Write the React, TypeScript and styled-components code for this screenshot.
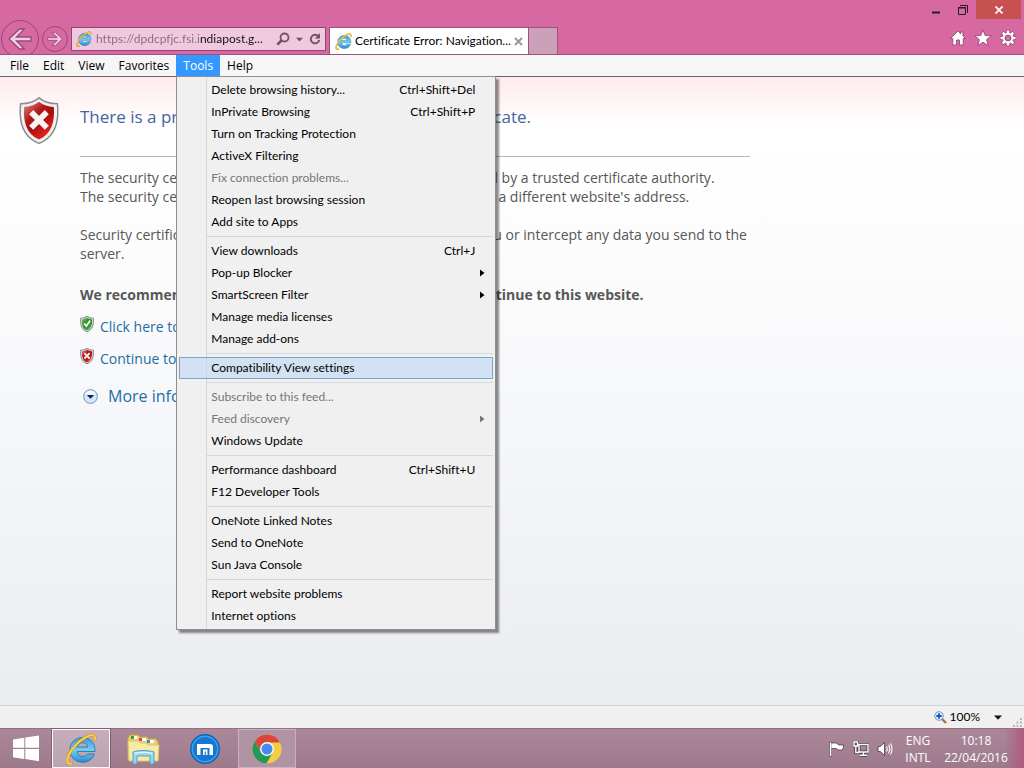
import React from "react";
import styled, { createGlobalStyle, css } from "styled-components";

const ui = `Lato, "Open Sans", sans-serif`;
const pageFont = `"Open Sans", "Noto Sans", sans-serif`;

const Global = createGlobalStyle`
  * { box-sizing: border-box; }
  body { margin: 0; font: 12px/16px ${ui}; font-variant-ligatures: none; color: #000; }
  button { font: inherit; font-variant-ligatures: none; color: inherit; border: 0; padding: 0; background: none; text-align: left; }
  svg { display: block; flex: none; }
`;

/* ---------- window frame ---------- */

const Window = styled.div`
  min-height: 100vh;
  display: flex;
  flex-direction: column;
`;

const TitleBar = styled.header`
  display: flex;
  justify-content: space-between;
  height: 55px;
  background: #d669a1;
  border-bottom: 1px solid #a4507e;
  overflow: hidden;
`;

const NavRow = styled.div`
  display: flex;
  align-items: flex-end;
`;

const History = styled.div`
  display: flex;
  align-items: center;
  gap: 3px;
  height: 38px;
  padding: 8px 3px 0 1px;
`;

const RoundButton = styled.button<{ $size: number }>`
  flex: none;
  display: grid;
  place-items: center;
  width: ${(p) => p.$size}px;
  height: ${(p) => p.$size}px;
  border: 1px solid #96487a;
  border-radius: 50%;
`;

const AddressBar = styled.div`
  display: flex;
  align-items: center;
  width: 255px;
  height: 24px;
  margin: 0 3px 3px 0;
  padding: 0 4px;
  gap: 4px;
  background: #f1c9de;
  border: 1px solid #8f4672;
`;

const AddressInput = styled.input`
  flex: 1;
  min-width: 0;
  padding: 0;
  border: 0;
  font: 12px/16px ${ui};
  font-variant-ligatures: none;
  background: linear-gradient(90deg, #866c7b 104px, #111 104px);
  background-clip: text;
  -webkit-text-fill-color: transparent;
  outline: none;
`;

const AddressTools = styled.div`
  display: flex;
  align-items: center;
  gap: 6px;
`;

const Tab = styled.div`
  display: flex;
  align-items: center;
  gap: 3px;
  width: 200px;
  height: 27px;
  padding: 0 6px 0 5px;
  background: #fff;
  border: 1px solid #a4507e;
  border-bottom: 0;
`;

const TabTitle = styled.span`
  flex: 1;
  white-space: nowrap;
`;

const NewTab = styled.button`
  width: 29px;
  height: 27px;
  background: #cba0b9;
  border: 1px solid #a4507e;
  border-width: 1px 1px 0 0;
`;

const FrameSide = styled.div`
  display: flex;
  flex-direction: column;
  justify-content: space-between;
  align-items: flex-end;
  padding: 0 3px 7px 0;
`;

const CaptionButtons = styled.div`
  display: flex;
`;

const CaptionButton = styled.button<{ $close?: boolean }>`
  display: grid;
  place-items: center;
  width: ${(p) => (p.$close ? 45 : 27)}px;
  height: 19px;
  background: ${(p) => (p.$close ? "#c75050" : "transparent")};
`;

const FrameTools = styled.div`
  display: flex;
  gap: 7px;
  padding-right: 4px;
`;

/* ---------- menu bar and drop-down ---------- */

const MenuBar = styled.nav`
  display: flex;
  height: 22px;
  padding-left: 3px;
  background: #f6f6f6;
  border-bottom: 1px solid #6d6266;
`;

const MenuSlot = styled.div`
  position: relative;
`;

const MenuTitle = styled.button<{ $open?: boolean }>`
  height: 21px;
  padding: 0 7px;
  font-family: ${pageFont};
  ${(p) => p.$open && css`background: #3399ff; color: #fff;`}
`;

const Dropdown = styled.div`
  position: absolute;
  z-index: 2;
  top: 21px;
  left: 0;
  width: 320px;
  padding: 2px;
  border: 1px solid #8f8f8f;
  background: linear-gradient(90deg, #f0f0f0 29px, #d7d7d7 29px, #d7d7d7 30px, #f0f0f0 30px);
  box-shadow: 3px 3px 2px rgba(0, 0, 0, 0.45);
`;

const MenuGroup = styled.div`
  & + & {
    margin-top: 7px;
    position: relative;
  }
  & + &::before {
    content: "";
    position: absolute;
    top: -4px;
    left: 27px;
    right: 0;
    height: 1px;
    background: #d7d7d7;
  }
`;

const MenuItem = styled.button<{ $active?: boolean }>`
  display: flex;
  align-items: center;
  width: 100%;
  height: 22px;
  padding: 0 7px 0 31px;
  border: 1px solid transparent;
  ${(p) => p.$active && css`
    border-color: #78a5d6;
    background: rgba(185, 215, 245, 0.55);
  `}
  &:disabled { color: #767676; }
`;

const ItemLabel = styled.span`
  flex: 1;
  white-space: nowrap;
`;

const Shortcut = styled.kbd`
  font: inherit;
  padding-right: 10px;
`;

/* ---------- page ---------- */

const Page = styled.main`
  flex: 1;
  display: flex;
  align-items: flex-start;
  gap: 21px;
  padding: 20px 19px;
  font-family: ${pageFont};
  background:
    linear-gradient(180deg, #ffebeb, rgba(255, 255, 255, 0) 50px),
    linear-gradient(180deg, #fff 60px, #fcfcfc 180px, #f6f7fa 340px, #ebecf0);
`;

const Article = styled.article`
  flex: 1;
  min-width: 0;
  max-width: 670px;
  color: #575757;
  font-size: 14px;
  line-height: 19px;
`;

const Headline = styled.h1`
  margin: 0;
  padding: 8px 0 27px;
  border-bottom: 1px solid #b6babf;
  font-size: 17px;
  line-height: 24px;
  font-weight: 400;
  color: #4465a2;
`;

const Para = styled.p`
  margin: 0;
  padding-top: 19px;
`;

const Intro = styled(Para)`
  padding-top: 11px;
`;

const Strong = styled(Para)`
  padding-top: 22px;
  font-weight: 700;
`;

const Choice = styled.div<{ $large?: boolean }>`
  display: flex;
  align-items: center;
  gap: ${(p) => (p.$large ? 10 : 6)}px;
  height: 19px;
  margin-top: ${(p) => (p.$large ? 19 : 13)}px;
  padding-left: ${(p) => (p.$large ? 3 : 0)}px;
  font-size: ${(p) => (p.$large ? 16 : 14)}px;
  svg { margin-bottom: ${(p) => (p.$large ? 0 : 6)}px; }
`;

const PageLink = styled.a`
  color: #1e6ea6;
  text-decoration: none;
`;

const StatusBar = styled.footer`
  display: flex;
  justify-content: flex-end;
  align-items: center;
  height: 23px;
  padding-right: 2px;
  background: #f0f0f0;
  border-top: 1px solid #d4d5d8;
`;

const ZoomButton = styled.button`
  display: flex;
  align-items: center;
  gap: 3px;
`;

const ZoomArrow = styled.button`
  padding: 4px 11px 4px 14px;
`;

const Grip = styled.div`
  align-self: flex-end;
  padding-bottom: 1px;
`;

/* ---------- taskbar ---------- */

const Taskbar = styled.footer`
  display: flex;
  align-items: stretch;
  height: 40px;
  color: #fff;
  background:
    linear-gradient(270deg, #b05a80, rgba(176, 90, 128, 0) 20px),
    linear-gradient(180deg, #ab8799, #9c7a8c);
  border-top: 1px solid #927083;
`;

const StartButton = styled.button`
  display: grid;
  place-items: center;
  width: 51px;
`;

const Pins = styled.div`
  flex: 1;
  display: flex;
  gap: 4px;
  padding-left: 1px;
`;

const Pin = styled.button<{ $state?: "active" | "open" }>`
  display: grid;
  place-items: center;
  width: 58px;
  ${(p) => p.$state === "active" && css`
    background: linear-gradient(#c6adba, #bba3b0);
    border: 1px solid #fdf8fb;
    outline: 1px solid #80606f;
    outline-offset: 0;
  `}
  ${(p) => p.$state === "open" && css`
    background: #b094a3;
    border: 1px solid #c9b3bf;
  `}
`;

const Tray = styled.div`
  display: flex;
  align-items: center;
  gap: 8px;
  padding-right: 15px;
`;

const TrayText = styled.button<{ $w: number }>`
  width: ${(p) => p.$w}px;
  font-family: ${pageFont};
  text-align: center;
  line-height: 17px;
`;

/* ---------- drawings ---------- */

const IeLogo = ({ size }: { size: number }) => (
  <svg width={size} height={size} viewBox="0 0 32 32" aria-hidden="true">
    <defs>
      <linearGradient id={`ie${size}`} x1="0" y1="0" x2="0" y2="1">
        <stop offset="0" stopColor="#3d9ad6" />
        <stop offset=".5" stopColor="#6fd0f5" />
        <stop offset="1" stopColor="#2c8ccb" />
      </linearGradient>
    </defs>
    <path
      d="M30 18.500H12.200c.4 3 2.600 4.900 5.500 4.900 2.200 0 3.900-.9 4.700-2.400h7C27.700 26 23.600 29.300 17.700 29.300 10.300 29.300 5 24.200 5 17S10.300 4.500 17.600 4.500C25.300 4.500 30.300 10 30 18.500zM12.400 14h10.400c-.4-2.600-2.400-4.200-5.200-4.200-2.700 0-4.700 1.600-5.200 4.200z"
      fill={`url(#ie${size})`}
      stroke="#1f70ad"
      strokeWidth=".8"
    />
    <path
      d="M6.500 30.500C3.200 31.300 1.600 29.500 2.500 25.500 4.200 18 13.500 7.200 22.500 3.300c4.600-2 7.700-1.400 7.600 2.700"
      fill="none"
      stroke="#c98f12"
      strokeWidth="3"
      strokeLinecap="round"
    />
    <path
      d="M6.500 30.500C3.200 31.300 1.600 29.500 2.500 25.500 4.200 18 13.500 7.200 22.500 3.300c4.600-2 7.700-1.400 7.600 2.700"
      fill="none"
      stroke="#fbd24a"
      strokeWidth="2"
      strokeLinecap="round"
    />
  </svg>
);

const Arrow = ({ w, back }: { w: number; back?: boolean }) => (
  <svg width={w} height={w} viewBox="0 0 24 24" aria-hidden="true">
    <path
      transform={back ? undefined : "matrix(-1 0 0 1 24 0)"}
      d="M1 12 11.500 2h4.800L8.500 10H23v4H8.500l7.800 8h-4.800z"
      fill="#f3cfe2"
      stroke="#96487a"
      strokeWidth="1.300"
    />
  </svg>
);

const Shield = ({ w, h, ok }: { w: number; h: number; ok?: boolean }) => {
  const id = `sh${w}${ok ? "g" : "r"}`;
  return (
    <svg width={w} height={h} viewBox="0 0 38 45" aria-hidden="true">
      <defs>
        <linearGradient id={id} x1="0" y1="0" x2=".7" y2="1">
          <stop offset="0" stopColor={ok ? "#7cc46a" : "#e08a8a"} />
          <stop offset=".4" stopColor={ok ? "#2f9a2a" : "#b31818"} />
          <stop offset=".6" stopColor={ok ? "#1d861c" : "#a80d0d"} />
          <stop offset="1" stopColor={ok ? "#4cc040" : "#ee2a20"} />
        </linearGradient>
      </defs>
      <path
        d="M19 .8c4.500 4 10.800 5.600 17.600 5.700C38.500 24 35 38 19 44.400 3 38-.5 24 1.400 6.500 8.200 6.400 14.500 4.800 19 .8z"
        fill="#f1f1f1"
        stroke="#8b8b8b"
        strokeWidth={w < 20 ? 3 : 1.4}
      />
      <path d="M19 4.500c4.200 3.200 9 4.600 14.200 5C34.300 24 31 35.200 19 40.800 7 35.200 3.700 24 4.800 9.500 10 9.100 14.800 7.700 19 4.500z" fill={`url(#${id})`} />
      {ok ? (
        <path d="m11 21 6 7.500L28 13" fill="none" stroke="#fff" strokeWidth="5" />
      ) : (
        <path d="m11.500 14.500 15 15m0-15-15 15" fill="none" stroke="#f4f4f4" strokeWidth="5.500" />
      )}
    </svg>
  );
};

const Submenu = () => (
  <svg width="5" height="8" viewBox="0 0 5 8" aria-hidden="true">
    <path d="M0 .5 4.500 4 0 7.500z" fill="currentColor" />
  </svg>
);

const Down = ({ color, w = 8 }: { color: string; w?: number }) => (
  <svg width={w} height="5" viewBox="0 0 8 5" aria-hidden="true">
    <path d="M0 .5h8L4 4.700z" fill={color} />
  </svg>
);

const ExplorerIcon = () => (
  <svg width="34" height="32" viewBox="0 0 34 32" aria-hidden="true">
    <path d="M2 5 4 2h8l2 2h7l1 2h8l2 3v18H2z" fill="#e9cf72" stroke="#c9a844" />
    <path d="M5 3h6v3H5z" fill="#fff" /><path d="M5 3h3v3H5z" fill="#2fa13b" />
    <path d="M13 5h7v3h-7z" fill="#fff" /><path d="M13 5h3v3h-3z" fill="#cf4a35" />
    <path d="M21 7h7v3h-7z" fill="#fff" /><path d="M21 7h3v3h-3z" fill="#2f8fd0" />
    <path d="M2 8h10l2 2h6l2 2h11l-1 16H3z" fill="#f8e9a4" stroke="#dfc568" />
    <path d="M7 19c6-2 14-2 21 0v12h-4v-8H11v8H7z" fill="#9ad5ee" stroke="#4e9fca" />
    <path d="M8.500 20.500c6-1.500 12-1.500 18 0" fill="none" stroke="#dff5fd" strokeWidth="1.400" />
  </svg>
);

const MaxthonIcon = () => (
  <svg width="32" height="32" viewBox="0 0 32 32" aria-hidden="true">
    <circle cx="16" cy="16" r="15" fill="#0f62b5" />
    <circle cx="16" cy="16" r="13.500" fill="#35a6ee" />
    <circle cx="16" cy="16" r="12" fill="#1577d3" />
    <path d="M8 22V11h13q3 0 3 3v8h-3.500v-7H11.500v7z" fill="#fff" />
    <path d="M14 22v-5.500h4.500V22h-1.700v-3.500h-1.100V22z" fill="#fff" />
  </svg>
);

const ChromeIcon = () => (
  <svg width="32" height="32" viewBox="0 0 32 32" aria-hidden="true">
    <circle cx="16" cy="16" r="14.500" fill="#f8cc42" />
    <path d="M16 9.500h13A14.500 14.500 0 0 0 3.800 8.200L10 19z" fill="#d9473b" />
    <path d="M3.800 8.200A14.500 14.500 0 0 0 15.500 30.500L21.700 19.500 16 22.500l-6-3.300z" fill="#21995a" />
    <circle cx="16" cy="16" r="7" fill="#f7f7f7" />
    <circle cx="16" cy="16" r="5.500" fill="#4688f0" />
  </svg>
);

const trayStroke = { fill: "none", stroke: "#fff", strokeWidth: 1.4 };

/* ---------- data ---------- */

type Item = { label: string; keys?: string; sub?: boolean; off?: boolean; active?: boolean };

const toolsMenu: Item[][] = [
  [
    { label: "Delete browsing history...", keys: "Ctrl+Shift+Del" },
    { label: "InPrivate Browsing", keys: "Ctrl+Shift+P" },
    { label: "Turn on Tracking Protection" },
    { label: "ActiveX Filtering" },
    { label: "Fix connection problems...", off: true },
    { label: "Reopen last browsing session" },
    { label: "Add site to Apps" },
  ],
  [
    { label: "View downloads", keys: "Ctrl+J" },
    { label: "Pop-up Blocker", sub: true },
    { label: "SmartScreen Filter", sub: true },
    { label: "Manage media licenses" },
    { label: "Manage add-ons" },
  ],
  [{ label: "Compatibility View settings", active: true }],
  [
    { label: "Subscribe to this feed...", off: true },
    { label: "Feed discovery", off: true, sub: true },
    { label: "Windows Update" },
  ],
  [{ label: "Performance dashboard", keys: "Ctrl+Shift+U" }, { label: "F12 Developer Tools" }],
  [{ label: "OneNote Linked Notes" }, { label: "Send to OneNote" }, { label: "Sun Java Console" }],
  [{ label: "Report website problems" }, { label: "Internet options" }],
];

const menus = ["File", "Edit", "View", "Favorites", "Tools", "Help"];

export default function App() {
  return (
    <>
      <Global />
      <Window>
        <TitleBar>
          <NavRow>
            <History>
              <RoundButton $size={38} aria-label="Back"><Arrow w={24} back /></RoundButton>
              <RoundButton $size={26} aria-label="Forward"><Arrow w={16} /></RoundButton>
            </History>
            <AddressBar>
              <IeLogo size={16} />
              <AddressInput aria-label="Address" defaultValue="https://dpdcpfjc.fsi.indiapost.g..." />
              <AddressTools>
                <button aria-label="Search">
                  <svg width="14" height="14" viewBox="0 0 14 14">
                    <circle cx="8.500" cy="5.500" r="4" fill="none" stroke="#6f5465" strokeWidth="1.800" />
                    <path d="M5.500 8.500 1.300 12.700" stroke="#6f5465" strokeWidth="2.600" />
                  </svg>
                </button>
                <button aria-label="Show address list"><Down color="#6f5465" w={7} /></button>
                <button aria-label="Refresh">
                  <svg width="12" height="14" viewBox="0 0 12 14">
                    <path d="M9.600 4.600A4.300 4.300 0 1 0 10.300 8" fill="none" stroke="#6f5465" strokeWidth="1.900" />
                    <path d="M11 1v5.500H5.800z" fill="#6f5465" />
                  </svg>
                </button>
              </AddressTools>
            </AddressBar>
            <Tab>
              <IeLogo size={17} />
              <TabTitle>Certificate Error: Navigation...</TabTitle>
              <button aria-label="Close tab">
                <svg width="9" height="9" viewBox="0 0 9 9">
                  <path d="m1 1 7 7m0-7L1 8" stroke="#9a9a9a" strokeWidth="2" />
                </svg>
              </button>
            </Tab>
            <NewTab aria-label="New tab" />
          </NavRow>
          <FrameSide>
            <CaptionButtons>
              <CaptionButton aria-label="Minimize">
                <svg width="8" height="8" viewBox="0 0 8 8"><path d="M0 5.500h8v2H0z" fill="#2a1a22" /></svg>
              </CaptionButton>
              <CaptionButton aria-label="Restore">
                <svg width="10" height="10" viewBox="0 0 10 10">
                  <path d="M.5 2v7.500h7V2.500h-7" fill="none" stroke="#2a1a22" />
                  <path d="M0 2h8v1.500H0z" fill="#2a1a22" />
                  <path d="M2 .5h7.500v7.500" fill="none" stroke="#2a1a22" />
                </svg>
              </CaptionButton>
              <CaptionButton $close aria-label="Close">
                <svg width="8" height="8" viewBox="0 0 8 8"><path d="m.5.5 7 7m0-7-7 7" stroke="#fff" strokeWidth="1.700" /></svg>
              </CaptionButton>
            </CaptionButtons>
            <FrameTools>
              <button aria-label="Home">
                <svg width="18" height="18" viewBox="0 0 18 18">
                  <path d="M9 2 1.500 9.500h2.300V16h3.700v-5h3v5h3.700V9.500h2.300L14 7V3h-2.300v2z" fill="#fff" stroke="#8a3f6a" strokeWidth=".8" />
                </svg>
              </button>
              <button aria-label="Favorites">
                <svg width="18" height="18" viewBox="0 0 18 18">
                  <path d="m9 1 2.200 5.500 6 .3-4.600 3.800 1.600 5.900L9 13.200l-5.200 3.300 1.600-5.900L.8 6.800l6-.3z" fill="#fff" stroke="#8a3f6a" strokeWidth=".8" />
                </svg>
              </button>
              <button aria-label="Tools">
                <svg width="18" height="18" viewBox="0 0 18 18">
                  <g stroke="#8a3f6a" strokeWidth="4"><path d="M9 1v16M1 9h16M3.300 3.300l11.400 11.400M14.700 3.300 3.300 14.700" /></g>
                  <g stroke="#fff" strokeWidth="2.600"><path d="M9 1.500v15M1.500 9h15M3.700 3.700l10.600 10.600M14.300 3.700 3.700 14.300" /></g>
                  <circle cx="9" cy="9" r="5.300" fill="#fff" />
                  <circle cx="9" cy="9" r="3" fill="#d669a1" stroke="#8a3f6a" strokeWidth=".8" />
                </svg>
              </button>
            </FrameTools>
          </FrameSide>
        </TitleBar>

        <MenuBar>
          {menus.map((m) => (
            <MenuSlot key={m}>
              <MenuTitle $open={m === "Tools"}>{m}</MenuTitle>
              {m === "Tools" && (
                <Dropdown role="menu">
                  {toolsMenu.map((group, i) => (
                    <MenuGroup key={i}>
                      {group.map((it) => (
                        <MenuItem key={it.label} role="menuitem" disabled={it.off} $active={it.active}>
                          <ItemLabel>{it.label}</ItemLabel>
                          {it.keys && <Shortcut>{it.keys}</Shortcut>}
                          {it.sub && <Submenu />}
                        </MenuItem>
                      ))}
                    </MenuGroup>
                  ))}
                </Dropdown>
              )}
            </MenuSlot>
          ))}
        </MenuBar>

        <Page>
          <Shield w={40} h={47} />
          <Article>
            <Headline>There is a problem with this website's security certificate.</Headline>
            <Intro>
              The security certificate presented by this website was not issued by a trusted certificate authority.
              <br />
              The security certificate presented by this website was issued for a different website's address.
            </Intro>
            <Para>
              Security certificate problems may indicate an attempt to fool you or intercept any data you send to the
              server.
            </Para>
            <Strong>We recommend that you close this webpage and do not continue to this website.</Strong>
            <Choice>
              <Shield w={14} h={16} ok />
              <PageLink href="#close">Click here to close this webpage.</PageLink>
            </Choice>
            <Choice>
              <Shield w={14} h={16} />
              <PageLink href="#continue">Continue to this website (not recommended).</PageLink>
            </Choice>
            <Choice $large>
              <svg width="15" height="15" viewBox="0 0 15 15" aria-hidden="true">
                <circle cx="7.500" cy="7.500" r="6.900" fill="#d3e5f7" stroke="#7395bd" />
                <path d="M2 6a5.700 5.700 0 0 1 11 0z" fill="#f3f8fd" />
                <path d="M3.800 6h7.400L7.500 9.800z" fill="#0b2560" />
              </svg>
              <PageLink href="#more">More information</PageLink>
            </Choice>
          </Article>
        </Page>

        <StatusBar>
          <ZoomButton>
            <svg width="13" height="13" viewBox="0 0 13 13" aria-hidden="true">
              <path d="m8 8 4 4" stroke="#a8713e" strokeWidth="2.400" />
              <circle cx="5" cy="5" r="4.300" fill="#d8ecfb" stroke="#6f9cc8" />
              <path d="M5 2.300v5.400M2.300 5h5.400" stroke="#1b57b8" strokeWidth="1.800" />
            </svg>
            100%
          </ZoomButton>
          <ZoomArrow aria-label="Change zoom level"><Down color="#111" /></ZoomArrow>
          <Grip>
            <svg width="9" height="9" viewBox="0 0 9 9" aria-hidden="true">
              <path d="M7 0h2v2H7zM3.500 3.500h2v2h-2zM7 3.500h2v2H7zM0 7h2v2H0zM3.500 7h2v2h-2zM7 7h2v2H7z" fill="#b9b9b9" />
            </svg>
          </Grip>
        </StatusBar>

        <Taskbar>
          <StartButton aria-label="Start">
            <svg width="28" height="27" viewBox="0 0 28 27">
              <path d="M1 4.500 12.300 2.800v10H1zM13.300 2.600 27 .5v12.300H13.300zM1 13.900h11.300v10L1 22.300zM13.300 13.900H27v12.300l-13.700-2.100z" fill="#fff" />
            </svg>
          </StartButton>
          <Pins>
            <Pin $state="active" aria-label="Internet Explorer"><IeLogo size={32} /></Pin>
            <Pin aria-label="File Explorer"><ExplorerIcon /></Pin>
            <Pin aria-label="Maxthon"><MaxthonIcon /></Pin>
            <Pin $state="open" aria-label="Google Chrome"><ChromeIcon /></Pin>
          </Pins>
          <Tray>
            <button aria-label="Action Center">
              <svg width="16" height="16" viewBox="0 0 16 16">
                <path d="M1.200 1v14.500" stroke="#4d3a45" strokeWidth="3" />
                <path d="M2 2h6l1.500 2H15l-1.500 5H9L7.500 7.500H2z" fill="#fff" stroke="#4d3a45" strokeWidth=".8" />
                <path d="M1.500 1.500V15" stroke="#fff" strokeWidth="1.600" />
              </svg>
            </button>
            <button aria-label="Network">
              <svg width="16" height="16" viewBox="0 0 16 16">
                <g {...trayStroke} stroke="#4d3a45" strokeWidth={3}>
                  <path d="M6 3.500h9v7.500H6zM10.500 11v3M7 14.300h7M1 1h3.500v4H1zM2.800 5v6.500H6" />
                </g>
                <g {...trayStroke}>
                  <path d="M6 3.500h9v7.500H6zM10.500 11v3M7 14.300h7M1 1h3.500v4H1zM2.800 5v6.500H6" />
                </g>
              </svg>
            </button>
            <button aria-label="Volume">
              <svg width="16" height="16" viewBox="0 0 16 16">
                <path d="M1 5.500h2.500L7.500 1.500v13l-4-4H1z" fill="#fff" stroke="#4d3a45" strokeWidth=".8" />
                <path d="M9.500 5.500q1.500 2.500 0 5M11.500 3.800q2.500 4.200 0 8.400M13.500 2.500q3 5.500 0 11" {...trayStroke} strokeWidth={1.1} />
              </svg>
            </button>
            <TrayText $w={34}>ENG<br />INTL</TrayText>
            <TrayText $w={66}>10:18<br />22/04/2016</TrayText>
          </Tray>
        </Taskbar>
      </Window>
    </>
  );
}
